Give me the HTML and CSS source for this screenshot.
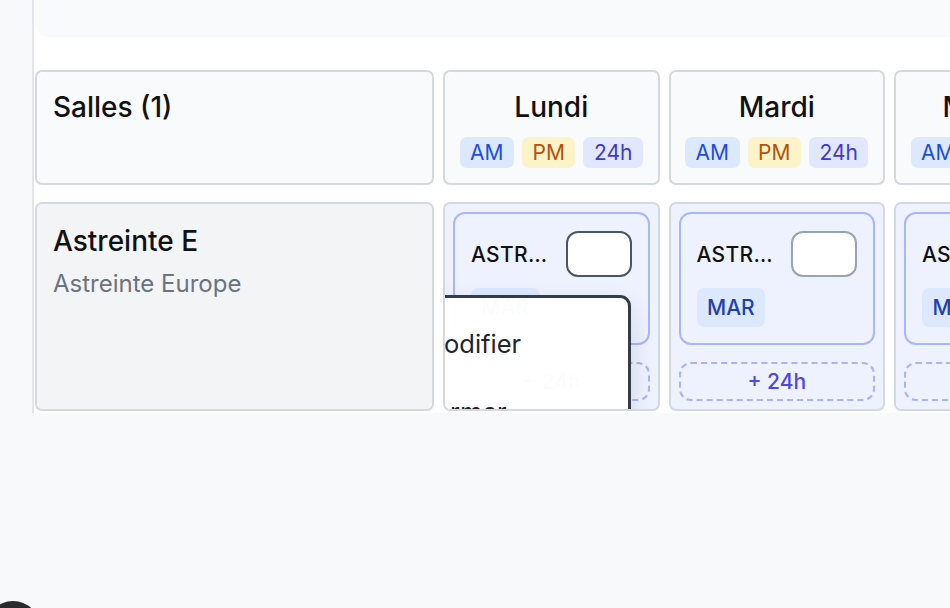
FILE: index.html
```html
<!DOCTYPE html>
<html lang="fr">
<head>
<meta charset="utf-8">
<title>Planning</title>
<link rel="stylesheet" href="styles.css">
</head>
<body>
<div class="app">
  <aside class="rail"></aside>
  <main class="panel">
    <div class="topbar"></div>
    <div class="board">
      <div class="cell head room-head"><div class="title">Salles (1)</div></div>
      <div class="cell head day-head">
        <div class="title">Lundi</div>
        <div class="tags"><span class="tag am">AM</span><span class="tag pm">PM</span><span class="tag h24">24h</span></div>
      </div>
      <div class="cell head day-head">
        <div class="title">Mardi</div>
        <div class="tags"><span class="tag am">AM</span><span class="tag pm">PM</span><span class="tag h24">24h</span></div>
      </div>
      <div class="cell head day-head">
        <div class="title">Mercredi</div>
        <div class="tags"><span class="tag am">AM</span><span class="tag pm">PM</span><span class="tag h24">24h</span></div>
      </div>
      <div class="cell head day-head">
        <div class="title">Jeudi</div>
        <div class="tags"><span class="tag am">AM</span><span class="tag pm">PM</span><span class="tag h24">24h</span></div>
      </div>

      <div class="cell room">
        <div class="name">Astreinte E</div>
        <div class="desc">Astreinte Europe</div>
      </div>
      <div class="cell day">
        <div class="card">
          <div class="card-top"><span class="card-title">ASTREINTE E</span><span class="slot active"></span></div>
          <span class="code">MAR</span>
        </div>
        <div class="add">+ 24h</div>
        <div class="menu">
          <div class="menu-item">Modifier</div>
          <div class="menu-item second">Fermer</div>
        </div>
      </div>
      <div class="cell day">
        <div class="card">
          <div class="card-top"><span class="card-title">ASTREINTE E</span><span class="slot"></span></div>
          <span class="code">MAR</span>
        </div>
        <div class="add">+ 24h</div>
      </div>
      <div class="cell day">
        <div class="card">
          <div class="card-top"><span class="card-title">ASTREINTE E</span><span class="slot"></span></div>
          <span class="code">MAR</span>
        </div>
        <div class="add">+ 24h</div>
      </div>
      <div class="cell day">
        <div class="card">
          <div class="card-top"><span class="card-title">ASTREINTE E</span><span class="slot"></span></div>
          <span class="code">MAR</span>
        </div>
        <div class="add">+ 24h</div>
      </div>
    </div>
  </main>
</div>
<div class="fab"></div>
</body>
</html>
```
FILE: styles.css
```css
* { box-sizing: border-box; }
html, body {
  margin: 0;
  padding: 0;
  width: 950px;
  height: 608px;
  overflow: hidden;
  background: #f8f9fb;
  font-family: Inter, "Noto Sans", "Liberation Sans", sans-serif;
  color: #111111;
}
.app {
  display: flex;
  align-items: flex-start;
  width: 950px;
}
.rail {
  width: 32px;
  flex: none;
  height: 413px;
  background: #f8f9fb;
}
.panel {
  flex: 1;
  min-width: 0;
  height: 413px;
  background: #ffffff;
  border-left: 2px solid #e4e5ea;
  overflow: hidden;
}
.topbar {
  height: 37px;
  margin-left: 1px;
  background: #f9fafb;
  border-bottom-left-radius: 14px;
}
.board {
  display: grid;
  grid-template-columns: 399px repeat(4, 216.5px);
  grid-template-rows: 115px 209px;
  column-gap: 9px;
  row-gap: 17px;
  margin-top: 33px;
  margin-left: 1px;
  width: max-content;
}
.cell {
  border: 2px solid #d5d8de;
  border-radius: 7px;
}
.head {
  background: #f9fafb;
  padding: 14px 16px 0;
}
.title {
  font-size: 28px;
  line-height: 42px;
  font-weight: 450;
  white-space: nowrap;
}
.day-head { text-align: center; }
.tags {
  display: flex;
  justify-content: center;
  gap: 8px;
  margin-top: 9px;
}
.tag {
  height: 31px;
  line-height: 31px;
  padding: 0 10.5px;
  font-size: 21px;
  border-radius: 7px;
}
.am { background: #dbe8fe; color: #1d4ed8; }
.pm { background: #fdf3c8; color: #b45309; }
.h24 { background: #e0e7ff; color: #4338ca; }

.room {
  background: #f3f4f6;
  padding: 16px 16px;
}
.name {
  font-size: 28px;
  line-height: 42px;
  font-weight: 450;
}
.desc {
  margin-top: 4px;
  font-size: 24px;
  line-height: 36px;
  color: #6b7280;
}
.day {
  position: relative;
  overflow: hidden;
  background: #eef2ff;
  padding: 8px;
}
.card {
  border: 2px solid #aab6fb;
  border-radius: 12px;
  padding: 17px 16px 16px;
  display: flex;
  flex-direction: column;
  align-items: flex-start;
  gap: 11px;
}
.card-top {
  display: flex;
  align-items: center;
  gap: 12px;
  width: 100%;
}
.card-title {
  flex: 1;
  min-width: 0;
  overflow: hidden;
  white-space: nowrap;
  text-overflow: ellipsis;
  font-size: 21px;
  font-weight: 500;
  letter-spacing: 0.3px;
  color: #111111;
}
.slot {
  flex: none;
  width: 66px;
  height: 46px;
  background: #ffffff;
  border: 2px solid #9ca3af;
  border-radius: 12px;
}
.slot.active { border-color: #4b5563; }
.code {
  height: 39px;
  line-height: 39px;
  padding: 0 10.5px;
  font-size: 21px;
  font-weight: 500;
  color: #1e40af;
  background: #dbe8fe;
  border-radius: 7px;
}
.add {
  margin-top: 17px;
  height: 39px;
  line-height: 35px;
  border: 2px dashed #a5b4fc;
  border-radius: 12px;
  text-align: center;
  font-size: 21px;
  font-weight: 500;
  color: #4f46e5;
}
.menu {
  position: absolute;
  left: -41px;
  top: 91px;
  width: 227px;
  border: 3px solid #343b49;
  border-radius: 11px;
  background: rgba(255, 255, 255, 0.985);
  box-shadow: 0 10px 24px rgba(17, 24, 39, 0.12);
  padding: 11px 0;
}
.menu-item {
  padding: 16.5px 14px;
  font-size: 25.5px;
  line-height: 35px;
  color: #1f2430;
  white-space: nowrap;
}
.menu-item.second { margin-top: 0; }
.fab {
  position: fixed;
  left: -15px;
  top: 601px;
  width: 56px;
  height: 56px;
  border-radius: 50%;
  background: #2a2a2a;
}
```
